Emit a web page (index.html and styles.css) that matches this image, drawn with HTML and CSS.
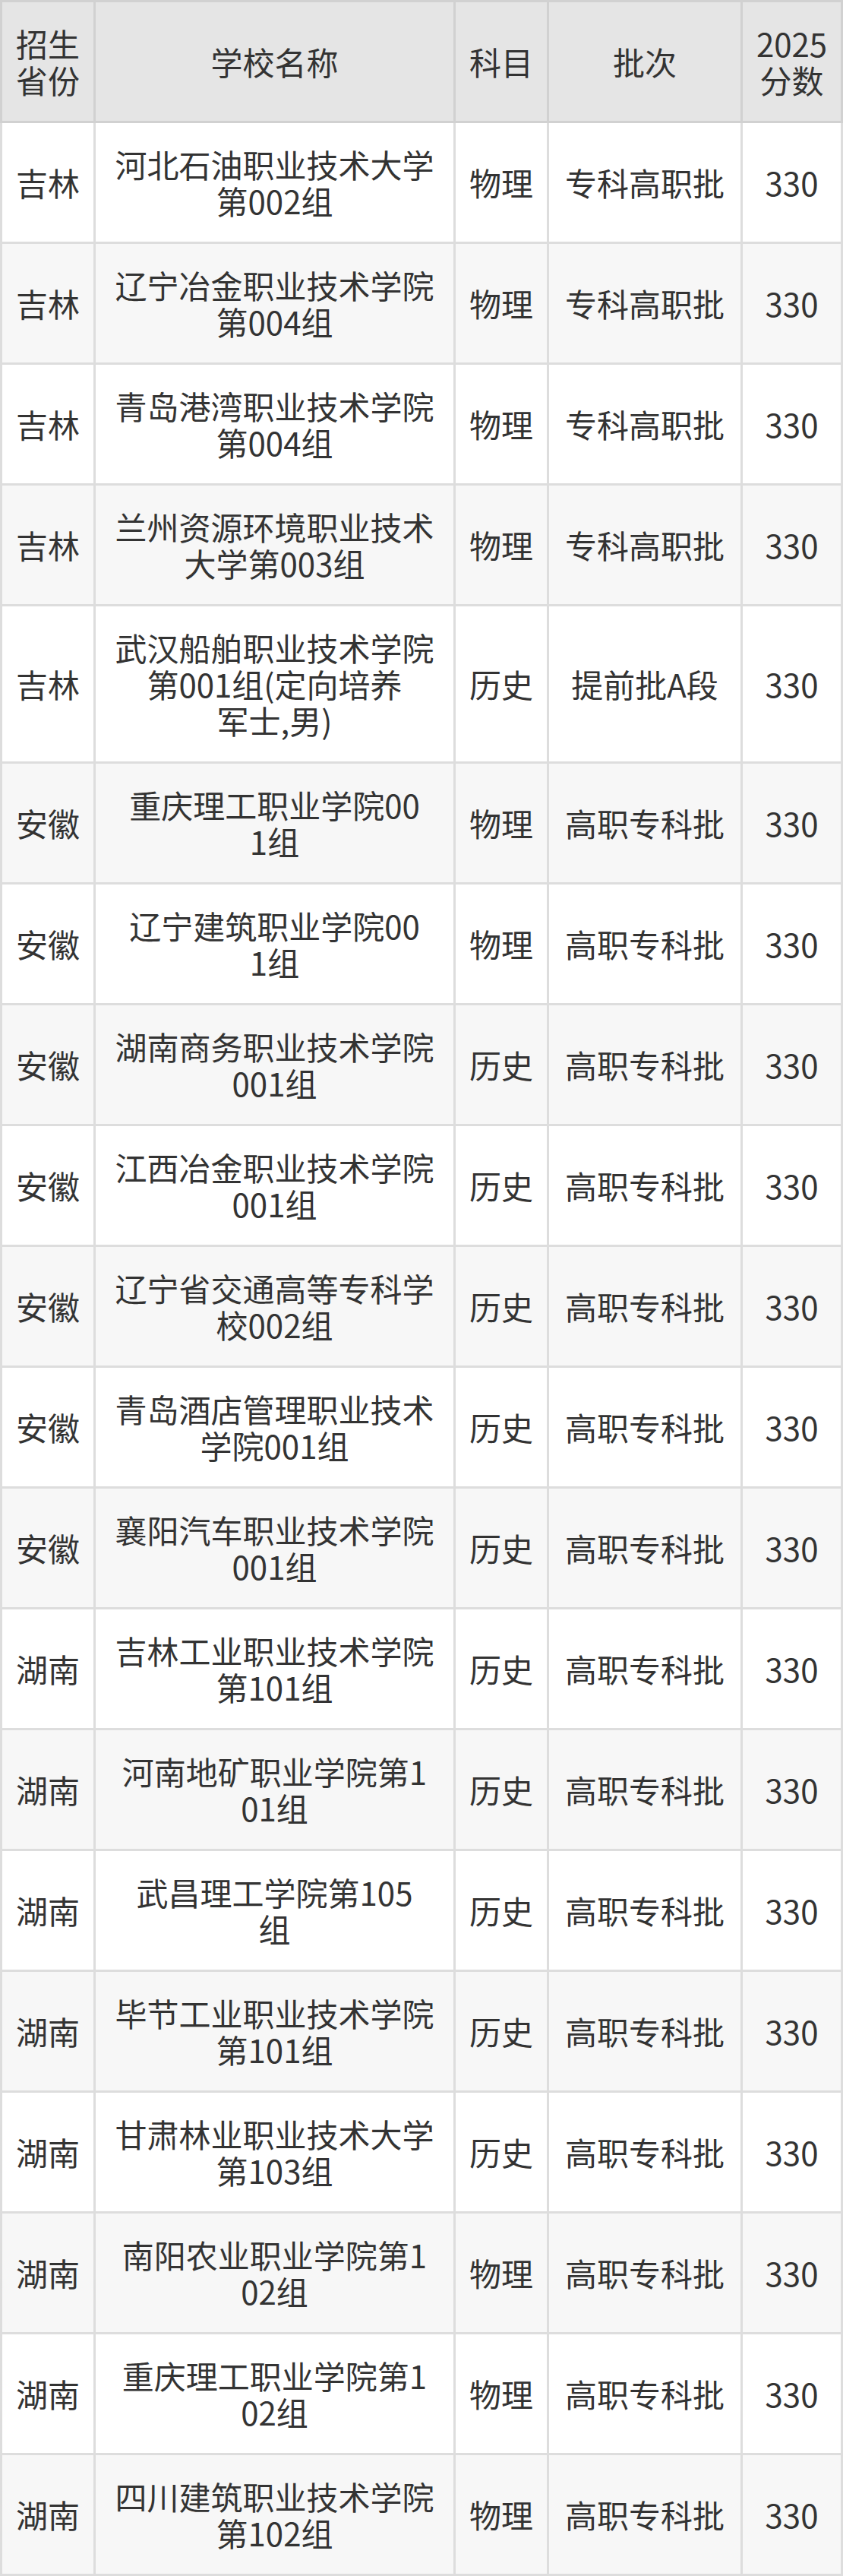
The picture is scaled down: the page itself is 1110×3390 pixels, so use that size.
FILE: index.html
```html
<!DOCTYPE html>
<html lang="zh-CN">
<head>
<meta charset="utf-8">
<title>分数线</title>
<link rel="stylesheet" href="styles.css">
</head>
<body>
<table class="score-table">
  <thead>
    <tr>
      <th class="c-prov">招生<br>省份</th>
      <th class="c-school">学校名称</th>
      <th class="c-subj">科目</th>
      <th class="c-batch">批次</th>
      <th class="c-score">2025<br>分数</th>
    </tr>
  </thead>
  <tbody>
    <tr><td>吉林</td><td>河北石油职业技术大学<br>第002组</td><td>物理</td><td>专科高职批</td><td>330</td></tr>
    <tr><td>吉林</td><td>辽宁冶金职业技术学院<br>第004组</td><td>物理</td><td>专科高职批</td><td>330</td></tr>
    <tr><td>吉林</td><td>青岛港湾职业技术学院<br>第004组</td><td>物理</td><td>专科高职批</td><td>330</td></tr>
    <tr><td>吉林</td><td>兰州资源环境职业技术<br>大学第003组</td><td>物理</td><td>专科高职批</td><td>330</td></tr>
    <tr><td>吉林</td><td>武汉船舶职业技术学院<br>第001组(定向培养<br>军士,男)</td><td>历史</td><td>提前批A段</td><td>330</td></tr>
    <tr><td>安徽</td><td>重庆理工职业学院00<br>1组</td><td>物理</td><td>高职专科批</td><td>330</td></tr>
    <tr><td>安徽</td><td>辽宁建筑职业学院00<br>1组</td><td>物理</td><td>高职专科批</td><td>330</td></tr>
    <tr><td>安徽</td><td>湖南商务职业技术学院<br>001组</td><td>历史</td><td>高职专科批</td><td>330</td></tr>
    <tr><td>安徽</td><td>江西冶金职业技术学院<br>001组</td><td>历史</td><td>高职专科批</td><td>330</td></tr>
    <tr><td>安徽</td><td>辽宁省交通高等专科学<br>校002组</td><td>历史</td><td>高职专科批</td><td>330</td></tr>
    <tr><td>安徽</td><td>青岛酒店管理职业技术<br>学院001组</td><td>历史</td><td>高职专科批</td><td>330</td></tr>
    <tr><td>安徽</td><td>襄阳汽车职业技术学院<br>001组</td><td>历史</td><td>高职专科批</td><td>330</td></tr>
    <tr><td>湖南</td><td>吉林工业职业技术学院<br>第101组</td><td>历史</td><td>高职专科批</td><td>330</td></tr>
    <tr><td>湖南</td><td>河南地矿职业学院第1<br>01组</td><td>历史</td><td>高职专科批</td><td>330</td></tr>
    <tr><td>湖南</td><td>武昌理工学院第105<br>组</td><td>历史</td><td>高职专科批</td><td>330</td></tr>
    <tr><td>湖南</td><td>毕节工业职业技术学院<br>第101组</td><td>历史</td><td>高职专科批</td><td>330</td></tr>
    <tr><td>湖南</td><td>甘肃林业职业技术大学<br>第103组</td><td>历史</td><td>高职专科批</td><td>330</td></tr>
    <tr><td>湖南</td><td>南阳农业职业学院第1<br>02组</td><td>物理</td><td>高职专科批</td><td>330</td></tr>
    <tr><td>湖南</td><td>重庆理工职业学院第1<br>02组</td><td>物理</td><td>高职专科批</td><td>330</td></tr>
    <tr><td>湖南</td><td>四川建筑职业技术学院<br>第102组</td><td>物理</td><td>高职专科批</td><td>330</td></tr>
  </tbody>
</table>
</body>
</html>
```

FILE: styles.css
```css
html, body {
  margin: 0;
  padding: 0;
  background: #ffffff;
}

.score-table {
  width: 1110px;
  border-collapse: separate;
  border-spacing: 0;
  table-layout: fixed;
  font-family: "Noto Sans CJK SC", "Noto Sans", sans-serif;
  font-size: 42px;
  line-height: 48px;
  color: #333333;
}

.score-table th,
.score-table td {
  box-sizing: border-box;
  padding: 30px 4px;
  text-align: center;
  vertical-align: middle;
  white-space: nowrap;
  font-weight: normal;
}

/* column widths (border-box) */
.c-prov { width: 126px; }
.c-school { width: 474px; }
.c-subj { width: 123px; }
.c-batch { width: 255px; }
.c-score { width: 132px; }

.score-table th {
  background: #e5e5e5;
  border-top: 3px solid #d1d1d1;
  border-right: 3px solid #d1d1d1;
  border-bottom: 3px solid #d1d1d1;
  border-left: 0;
}

.score-table th:first-child {
  border-left: 3px solid #d1d1d1;
}

.score-table td {
  border-right: 3px solid #dddddd;
  border-bottom: 3px solid #dddddd;
}

.score-table td:first-child {
  border-left: 3px solid #dddddd;
}

.score-table tbody tr:nth-child(odd) td {
  background: #ffffff;
}

.score-table tbody tr:nth-child(even) td {
  background: #f7f7f7;
}
```
